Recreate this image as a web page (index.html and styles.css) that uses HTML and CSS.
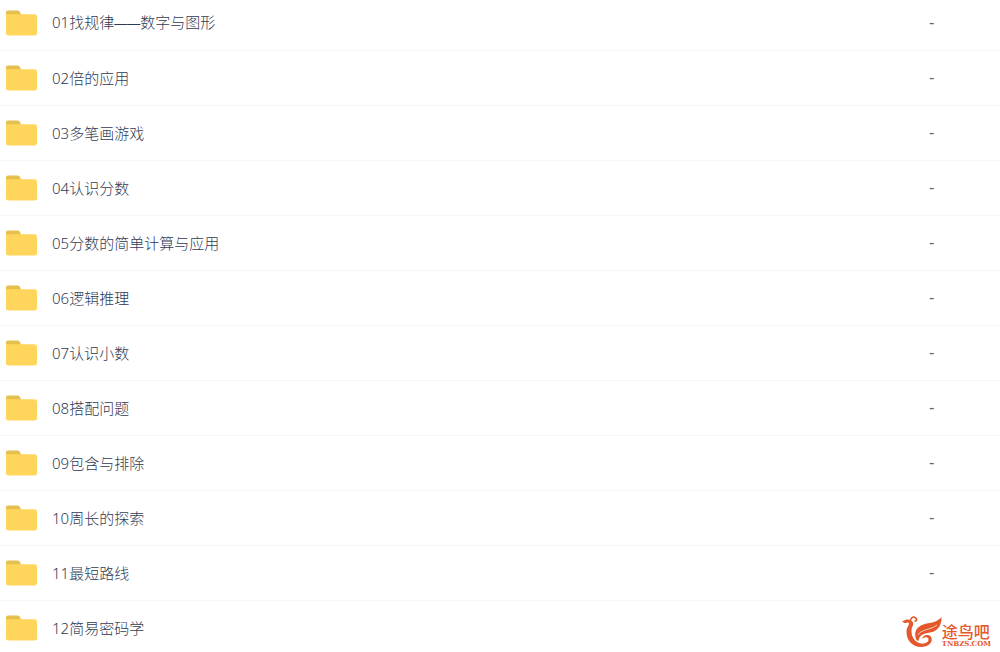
FILE: index.html
```html
<!DOCTYPE html>
<html lang="zh-CN">
<head>
<meta charset="utf-8">
<title>文件列表</title>
<link rel="stylesheet" href="styles.css">
</head>
<body>
<svg class="defs" aria-hidden="true">
  <symbol id="folder" viewBox="0 0 32 26">
    <path fill="#e5c04f" d="M0 8V2Q0 0 2 0H12Q13.500 0 14.200 1.500L15.500 4V8Z"/>
    <path fill="#ffd65b" d="M0 4H29.500Q32 4 32 6.500V23.500Q32 26 29.500 26H2.500Q0 26 0 23.500Z"/>
  </symbol>
</svg>
<main class="files">
<table class="list">
<tbody>
<tr class="row"><td class="name"><a class="link" href="#"><svg class="icon"><use href="#folder"/></svg><span>01找规律<span class="dash">——</span>数字与图形</span></a></td><td class="size">-</td></tr>
<tr class="row"><td class="name"><a class="link" href="#"><svg class="icon"><use href="#folder"/></svg>02倍的应用</a></td><td class="size">-</td></tr>
<tr class="row"><td class="name"><a class="link" href="#"><svg class="icon"><use href="#folder"/></svg>03多笔画游戏</a></td><td class="size">-</td></tr>
<tr class="row"><td class="name"><a class="link" href="#"><svg class="icon"><use href="#folder"/></svg>04认识分数</a></td><td class="size">-</td></tr>
<tr class="row"><td class="name"><a class="link" href="#"><svg class="icon"><use href="#folder"/></svg>05分数的简单计算与应用</a></td><td class="size">-</td></tr>
<tr class="row"><td class="name"><a class="link" href="#"><svg class="icon"><use href="#folder"/></svg>06逻辑推理</a></td><td class="size">-</td></tr>
<tr class="row"><td class="name"><a class="link" href="#"><svg class="icon"><use href="#folder"/></svg>07认识小数</a></td><td class="size">-</td></tr>
<tr class="row"><td class="name"><a class="link" href="#"><svg class="icon"><use href="#folder"/></svg>08搭配问题</a></td><td class="size">-</td></tr>
<tr class="row"><td class="name"><a class="link" href="#"><svg class="icon"><use href="#folder"/></svg>09包含与排除</a></td><td class="size">-</td></tr>
<tr class="row"><td class="name"><a class="link" href="#"><svg class="icon"><use href="#folder"/></svg>10周长的探索</a></td><td class="size">-</td></tr>
<tr class="row"><td class="name"><a class="link" href="#"><svg class="icon"><use href="#folder"/></svg>11最短路线</a></td><td class="size">-</td></tr>
<tr class="row"><td class="name"><a class="link" href="#"><svg class="icon"><use href="#folder"/></svg>12简易密码学</a></td><td class="size"></td></tr>
</tbody>
</table>
<div class="brand">
  <svg class="bird" viewBox="0 0 40 32" aria-hidden="true">
    <path fill="#e4582b" d="M0 5.500L4.500 3.500C7 3 10 4 11 6.500C12 9 9.500 11 9.500 15C9.500 20 12 25 17 27C21 28.500 26 27 26.500 24C27 20.500 22.500 20.500 20 23C21 18.500 27 18 29 21C32 26 26 31 19 31C10 31 4.500 24 4.500 16C4.500 11 7.500 9 7 7C6 5.500 4 7.500 2.500 7Z"/>
    <path fill="none" stroke="#e4582b" stroke-width="1.600" d="M8.500 4.500C9 1 12 0 13.500 2C15.500 3 14.500 5.500 12.500 5"/>
    <path fill="#e4582b" d="M14.500 24C10.500 14 17 9 25 7.500C32 6.500 36 5 39.500 1C40 10 35 15.500 28 16.500C21 17.500 17.500 19 16.500 25Z"/>
    <path fill="none" stroke="#fff" stroke-width=".7" d="M16 19C19 13 29 14 35 9"/>
  </svg>
  <div class="words"><span class="title">途鸟吧</span><span class="domain">TNBZS.COM</span></div>
</div>
</main>
</body>
</html>
```
FILE: styles.css
```css
body {
  margin: 0;
  background: #fff;
  color: #2f3b55;
  font: 15px/20px "Noto Sans", "Noto Sans CJK SC", sans-serif;
  overflow: hidden;
}
.defs {
  position: absolute;
  width: 0;
  height: 0;
}
.files {
  position: relative;
  margin-top: -4px;
}
.list {
  width: 100%;
  border-collapse: separate;
  border-spacing: 0;
}
.name,
.size {
  height: 54px;
  padding: 0;
  border-bottom: 1px solid #f5f6f8;
}
.row:last-child td {
  border-bottom: 0;
}
.size {
  width: 71px;
  color: #666;
  font-family: "DejaVu Sans", sans-serif;
}
.link {
  display: flex;
  align-items: center;
  gap: 15px;
  padding-left: 6px;
  color: inherit;
  font-weight: 300;
  text-decoration: none;
}
.dash {
  font-family: "Liberation Sans", sans-serif;
  font-size: 13px;
}
.icon {
  flex: none;
  width: 31px;
  height: 26px;
}
.brand {
  position: absolute;
  right: 9px;
  bottom: 7px;
  display: flex;
  align-items: flex-end;
  color: #e4582b;
}
.bird {
  width: 40px;
  height: 32px;
}
.words {
  display: flex;
  flex-direction: column;
}
.title {
  font: 500 16px/18px "Noto Sans CJK SC", sans-serif;
}
.domain {
  font: bold 7px/8px "DejaVu Serif", serif;
}
```
